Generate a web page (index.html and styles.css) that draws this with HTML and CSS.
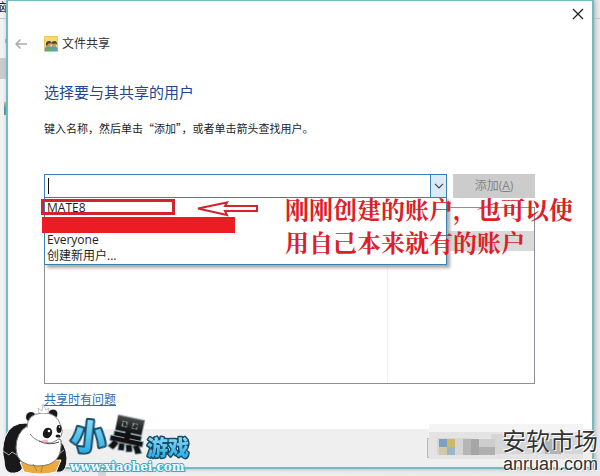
FILE: index.html
```
<!DOCTYPE html>
<html lang="zh-CN">
<head>
<meta charset="utf-8">
<title>文件共享</title>
<link rel="stylesheet" href="styles.css">
</head>
<body>
<div class="behind" aria-hidden="true">
  <span class="behind-text">脑</span>
  <span class="behind-line"></span>
  <span class="behind-mark"></span>
  <span class="behind-item"></span>
  <span class="behind-icon"></span>
  <span class="behind-split"></span>
</div>
<main class="dialog">
  <div class="caption">
    <button class="close" type="button" aria-label="关闭">
      <svg width="12" height="12" viewBox="0 0 12 12"><path d="M1 1l10 10M11 1l-10 10" stroke="#222" stroke-width="1.3"/></svg>
    </button>
  </div>
  <header class="head">
    <button class="back" type="button" aria-label="返回">
      <svg width="14" height="12" viewBox="0 0 14 12" fill="none" stroke="#aaa" stroke-width="1.5"><path d="M12 6H1M5.500 1.500L1 6l4.500 4.500"/></svg>
    </button>
    <svg class="app-icon" width="14" height="16" viewBox="0 0 14 16">
      <path d="M.5.5h13v15H.5z" fill="#f6d970" stroke="#e8c860"/>
      <path d="M1 15V12q3-4 6-1 3-3 6.500 1v3z" fill="#5b9fb4"/>
      <path d="M3 15q1-4 4-3l2 3z" fill="#6ea85a"/>
      <circle cx="4.500" cy="8.500" r="2.300" fill="#c99a63"/>
      <circle cx="9.800" cy="8.500" r="2.300" fill="#c99a63"/>
      <path d="M2 8q0-3 3-3t2.500 2.500Q4 6.500 3.500 9L2 10zM7.500 8q0-3 3-3t2.300 4l-1-1.500q-2 .5-3.300 0z" fill="#4b4638"/>
    </svg>
    <span class="app-name">文件共享</span>
  </header>
  <section class="content">
    <h1>选择要与其共享的用户</h1>
    <label class="hint" for="user">键入名称，然后单击“添加”，或者单击箭头查找用户。</label>
    <div class="picker">
      <div class="combo">
        <input id="user" type="text">
        <span class="caret"></span>
        <button class="arrow" type="button" aria-label="展开">
          <svg width="10" height="6" viewBox="0 0 10 6"><path d="M1 .8l4 4 4-4" fill="none" stroke="#444" stroke-width="1.200"/></svg>
        </button>
        <ul class="options">
          <li>MATE8<span class="frame"></span></li>
          <li class="redacted"></li>
          <li>Everyone</li>
          <li>创建新用户...</li>
        </ul>
        <svg class="pointer" width="66" height="20" viewBox="0 0 66 20"><path d="M2 9.500L31 3.500l-2 3.500h32v5H29l2 4z" fill="#fff" stroke="#d3232f" stroke-width="2"/></svg>
        <p class="note">刚刚创建的账户，也可以使用自己本来就有的账户</p>
      </div>
      <button class="add" type="button" disabled>添加(<u>A</u>)</button>
    </div>
    <div class="people">
      <div class="names"></div>
      <div class="levels"><div class="selected"></div></div>
    </div>
    <a class="help" href="#">共享时有问题</a>
  </section>
  <footer class="foot">
    <button class="share" type="button" aria-label="共享"></button>
    <svg class="mosaic" width="154" height="35" viewBox="0 0 154 35" shape-rendering="crispEdges">
      <path d="M0 0h154v35H0z" fill="#e4e4e4"/>
      <path d="M0 0h154v8H0z" fill="#f4f4f4"/>
      <path d="M8 14h34v17H8zM62 10h92v20H62z" fill="#d6d6d6"/>
      <path d="M10 15h8v8h-8z" fill="#7d9fc1"/><path d="M18 15h8v8h-8z" fill="#cfb867"/>
      <path d="M10 23h8v8h-8z" fill="#d0c8a8"/><path d="M18 23h8v8h-8z" fill="#9bb6ca"/>
      <path d="M34 15h8v16h-8z" fill="#b6b6b6"/><path d="M42 15h8v16h-8z" fill="#a6a6a6"/>
      <path d="M50 23h16v8H50z" fill="#afafaf"/><path d="M50 15h16v8H50z" fill="#cdcdcd"/>
      <path d="M116 15h16v15h-16z" fill="#b2b2b2"/>
    </svg>
  </footer>
</main>

<svg class="panda-logo" width="200" height="76" viewBox="0 0 200 76" role="img" aria-label="小黑游戏">
  <defs>
    <linearGradient id="blue" x1="0" y1="0" x2="0" y2="1"><stop offset="0" stop-color="#a6e9fc"/><stop offset="1" stop-color="#18a2df"/></linearGradient>
    <linearGradient id="dark" x1="0" y1="0" x2="0" y2="1"><stop offset="0" stop-color="#777"/><stop offset=".5" stop-color="#111"/></linearGradient>
  </defs>
  <g stroke="#fff" stroke-width="1">
    <path d="M27 23Q11 22 5 37q-4 13-1 23 0 11 6 13 9 1 12-4l9-32z" fill="#191919"/>
    <path d="M56 39q10 3 11 19 0 12-6 14-8 1-13-3l1-25z" fill="#191919"/>
    <path d="M20 62l41-2-5 12q-15 4-32 0z" fill="#edaa3c"/>
    <path d="M27 26q-11 7-11 22 0 18 22 18 25 0 23-26z" fill="#fff" stroke="#777"/>
    <circle cx="31" cy="17" r="5.500" fill="#191919"/>
    <circle cx="53" cy="14" r="5" fill="#191919"/>
    <path d="M27 28q0-14 15-15 15-1 19 13 5 12-10 17-20 1-24-15z" fill="#fff" stroke="none"/>
    <path d="M27 28q0-14 15-15 15-1 19 13 5 12-10 17-15 0-21-9" fill="none" stroke="#888"/>
  </g>
  <g fill="#191919">
    <ellipse cx="47.500" cy="33" rx="4.500" ry="5.500" transform="rotate(28 47.500 33)"/>
    <ellipse cx="59" cy="29" rx="2.500" ry="4"/>
    <ellipse cx="58" cy="36" rx="2.500" ry="1.500"/>
    <path d="M39 41q10 5 20 1" fill="none" stroke="#555"/>
    <path d="M3 51l6 4 3-3 5 3M64 50l-5 4" fill="none" stroke="#aaa"/>
    <path d="M39 13l-1-5 4 3 1-7 3 6 3-2-1 5" fill="#fff" stroke="#aaa" stroke-width=".7"/>
  </g>
  <circle cx="49" cy="31" r="1.300" fill="#fff"/><circle cx="59.500" cy="27" r=".8" fill="#fff"/>
  <ellipse cx="45" cy="41" rx="3" ry="1.500" fill="#f6b8bd"/>
  <path d="M33 64l4 7M43 65l-2 7" stroke="#bd7c20"/>
  <g class="logo-cjk">
    <text class="big" x="71" y="50" font-size="35" transform="rotate(6 88 38)" fill="url(#blue)">小</text>
    <text class="big" x="110" y="48" font-size="36" transform="rotate(12 128 34)" fill="url(#dark)">黑</text>
    <text class="small" x="147" y="55" font-size="21" fill="url(#blue)">游戏</text>
  </g>
  <text class="site" x="70" y="71">www.xiaohei.com</text>
</svg>

<div class="watermark"><span class="mark-name">安软市场</span><span class="mark-site">anruan.com</span></div>
</body>
</html>
```
FILE: styles.css
```
* { box-sizing: border-box; }

body {
  margin: 0;
  position: relative;
  min-height: 476px;
  overflow: hidden;
  background: #ececec;
  color: #1c1c1c;
  font: 12px/16px "Open Sans", "Noto Sans CJK SC", sans-serif;
}

button { padding: 0; border: 0; background: none; font: inherit; }
svg { display: block; }

/* Window partly hidden by the dialog */
.behind { position: absolute; inset: 0; background: linear-gradient(90deg, #f2f2f4, #e9e9eb); }
.behind > span { position: absolute; left: 0; }
.behind-text { top: 0; width: 7px; height: 16px; overflow: hidden; direction: rtl; }
.behind-line { top: 18px; width: 100%; height: 1px; background: #c9c9c9; }
.behind .behind-mark { top: 39px; left: 5px; width: 2px; height: 4px; background: #8ab0cc; }
.behind-item { top: 58px; width: 7px; height: 21px; background: #cbcbcf; }
.behind .behind-icon { top: 102px; left: 4px; width: 3px; height: 13px; background: linear-gradient(#e0c050, #3a8ac0 50%, #4fa060); }
.behind .behind-split { left: 98px; bottom: 0; width: 8px; height: 8px; background: #d5d5d5; }

.dialog {
  position: relative;
  margin: 0 6px;
  border: 2px solid #6fbcc2;
  border-top-width: 1px;
  background: #fff;
  box-shadow: 1px 0 4px #aaa;
}

.caption { display: flex; justify-content: flex-end; padding: 7px 8px 0; }
.close { display: grid; place-items: center; width: 12px; height: 12px; }

.head { display: flex; align-items: center; padding: 16px 0 0 7px; }
.back { width: 14px; margin-right: 15px; }
.app-icon { margin-right: 4px; }
.app-name { color: #333; }

.content { padding: 30px 57px 0 36px; }

h1 { margin: 0; font-size: 15px; line-height: 20px; font-weight: 400; color: #214792; }
.hint { display: block; margin-top: 18px; font-family: "Noto Sans CJK SC", sans-serif; font-size: 11px; }

.picker { display: flex; gap: 6px; margin-top: 38px; }
.combo { position: relative; z-index: 1; flex: 1; display: flex; height: 24px; border: 1px solid #3c7fb1; background: #fff; }
.combo input { flex: 1; min-width: 0; border: 0; outline: 0; padding: 0 3px; background: none; font: inherit; }
.caret { position: absolute; left: 3px; top: 3px; width: 1px; height: 16px; background: #111; }
.arrow { display: grid; place-items: center; width: 16px; border-left: 1px solid #3c7fb1; background: #d9ebf8; }

.options {
  position: absolute;
  top: 22px;
  left: -1px;
  right: -1px;
  margin: 0;
  padding: 2px 2px 0;
  border: 1px solid #3c7fb1;
  background: #fff;
  box-shadow: 3px 3px 3px #aaa;
  list-style: none;
}
.options li { position: relative; height: 16px; }
.frame { position: absolute; left: -6px; top: -1px; width: 134px; height: 16px; border: 3px solid #d3232f; }
.redacted::before { content: ""; position: absolute; left: -5px; top: 1px; width: 193px; height: 16px; background: #ec1c24; }
.pointer { position: absolute; left: 151px; top: 24px; }
.note {
  position: absolute;
  left: 240px;
  top: 17px;
  width: 290px;
  margin: 0;
  color: #dc2026;
  font: 700 24px/33px "Noto Serif CJK SC", "Noto Sans CJK SC", serif;
}

.add { width: 82px; height: 24px; background: #ccc; color: #858585; }

.people { display: flex; height: 177px; margin-top: 9px; border: 1px solid #8c8f96; }
.names { flex: 7; border-right: 1px solid #f0f0f0; }
.levels { flex: 3; padding-top: 23px; }
.selected { height: 20px; background: #d9d9d9; }

.help { display: inline-block; margin-top: 8px; color: #2a6db8; }

.foot { position: relative; display: flex; justify-content: flex-end; margin-top: 21px; padding: 9px 10px; background: #efefef; }
.share { width: 155px; height: 20px; border: 1px solid #bbb; background: #e1e1e1; }
.mosaic { position: absolute; right: 9px; top: -5px; }

.panda-logo { position: absolute; left: 0; top: 400px; }
.logo-cjk { font-family: "Noto Sans CJK SC", sans-serif; font-weight: 900; }
.big, .small { stroke: #174b66; stroke-linejoin: round; paint-order: stroke; }
.big { stroke-width: 4px; filter: drop-shadow(0 0 1px #fff); }
.small { stroke-width: 3px; filter: drop-shadow(0 0 1px #fff); }
.big[fill="url(#dark)"] { stroke: #8fa3ac; stroke-width: 2px; }
.site { font: 700 12px "DejaVu Serif", serif; fill: #fff; stroke: #39a9ce; stroke-width: 2px; paint-order: stroke; }

.watermark { position: absolute; right: 2px; top: 426px; display: flex; flex-direction: column; align-items: flex-end; color: #333; text-shadow: -1px -1px #fff, 1px 1px #fff; }
.mark-name { font: 24px/28px "Noto Sans CJK SC", sans-serif; }
.mark-site { font: 18px/20px "Liberation Sans", sans-serif; }
```
